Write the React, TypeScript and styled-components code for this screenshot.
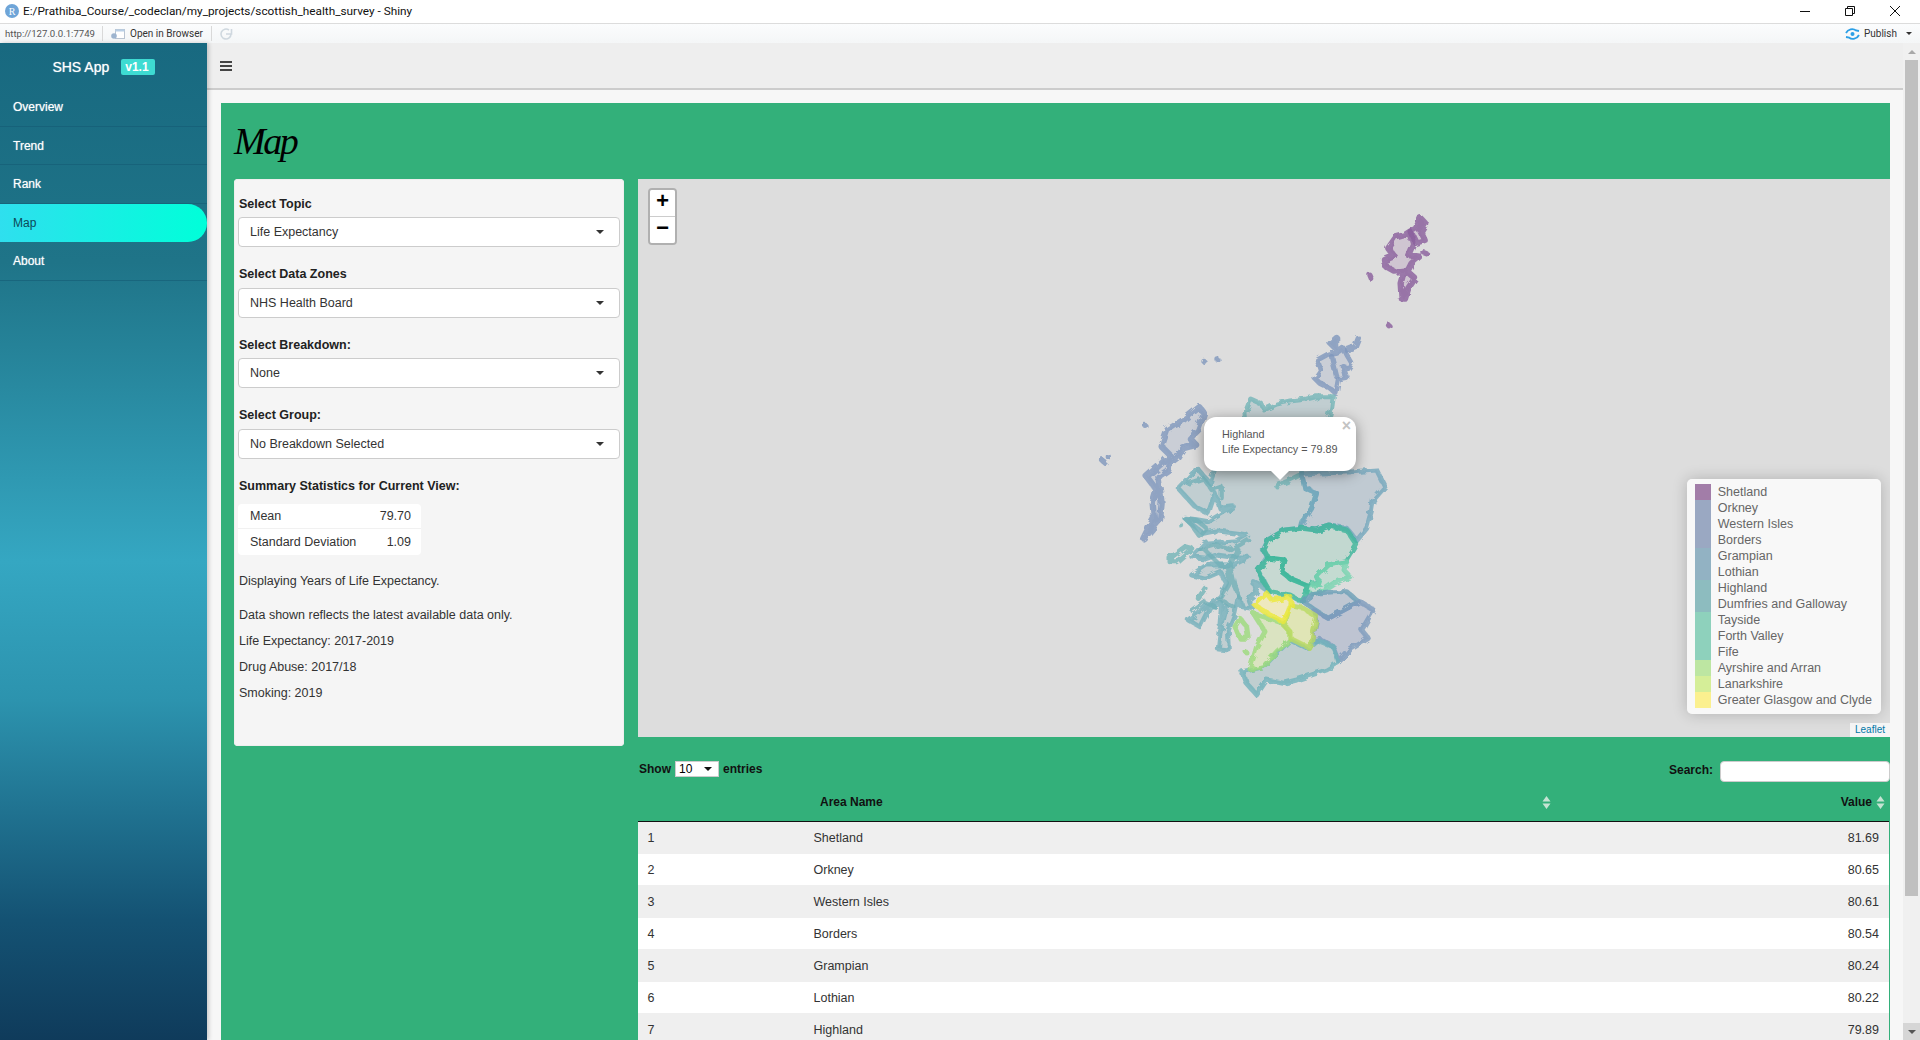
import styled, { createGlobalStyle } from "styled-components";

const GlobalStyle = createGlobalStyle`
  html, body {
    margin: 0;
    height: 100%;
    overflow: hidden;
    background: #fff;
    font-family: "Liberation Sans", Arial, sans-serif;
    font-size: 12.5px;
    color: #333;
  }
  * { box-sizing: border-box; }
`;

const Shell = styled.div`
  display: flex;
  flex-direction: column;
  width: 1920px;
  height: 1040px;
  overflow: hidden;
`;

/* window chrome */
const TitleBar = styled.div`
  display: flex;
  align-items: center;
  height: 24px;
  padding: 0 0 1px 5px;
  background: #fff;
  border-bottom: 1px solid #dcdcdc;
`;

const RLogo = styled.div`
  display: flex;
  align-items: center;
  justify-content: center;
  width: 14px;
  height: 14px;
  margin-right: 4px;
  border-radius: 50%;
  background: #6fa5d8;
  color: #fff;
  font-family: "Liberation Serif", serif;
  font-size: 10px;
`;

const TitleText = styled.div`
  flex: 1;
  font-family: Roboto, sans-serif;
  font-size: 11.8px;
  color: #111;
`;

const WinControls = styled.div`
  display: flex;
  align-items: center;
  gap: 35px;
  padding-right: 20px;
`;

const Toolbar = styled.div`
  display: flex;
  align-items: center;
  height: 19px;
  padding-left: 5px;
  background: linear-gradient(180deg, #fbfcfd 0%, #f4f6f7 100%);
  font-family: Roboto, sans-serif;
  font-size: 10px;
  color: #333;
`;

const UrlText = styled.span`
  width: 97px;
  font-size: 9.6px;
  white-space: nowrap;
  color: #555;
`;

const ToolSep = styled.div`
  width: 1px;
  height: 15px;
  background: #d9d9d9;
`;

const BrowserButton = styled.div`
  display: flex;
  align-items: center;
  gap: 5px;
  width: 108px;
  padding-left: 8px;
`;

const RefreshSlot = styled.div`
  display: flex;
  flex: 1;
  padding-left: 7px;
`;

const PublishButton = styled.div`
  display: flex;
  align-items: center;
  gap: 4px;
  padding-right: 8px;
`;

const PublishLabel = styled.span`
  width: 38px;
`;

const SmallCaret = styled.span<{ $color?: string; $size?: number }>`
  width: 0;
  height: 0;
  border-left: ${({ $size }) => $size ?? 4}px solid transparent;
  border-right: ${({ $size }) => $size ?? 4}px solid transparent;
  border-top: ${({ $size }) => $size ?? 4}px solid ${({ $color }) => $color ?? "#333"};
`;

const Body = styled.div`
  display: flex;
  flex: 1;
  min-height: 0;
`;

/* sidebar */
const Sidebar = styled.nav`
  flex: 0 0 207px;
  background: linear-gradient(180deg, #186980 0%, #1f7488 22%, #35a7c2 52%, #2c93ae 66%, #145273 88%, #0f3b5b 100%);
  box-shadow: 2px 0 4px rgba(0, 0, 0, 0.18);
  z-index: 1;
`;

const Brand = styled.div`
  display: flex;
  align-items: center;
  justify-content: center;
  gap: 12px;
  height: 45px;
  padding-top: 2px;
  color: #fff;
  font-size: 14px;
  text-shadow: 0 0 1px rgba(255, 255, 255, 0.7);
`;

const Version = styled.span`
  padding: 0 6px 0 4px;
  height: 16px;
  line-height: 17px;
  border-radius: 2px;
  background: #3edbd2;
  font-size: 12px;
  font-weight: 700;
  text-shadow: none;
`;

const NavItem = styled.div<{ $active?: boolean }>`
  display: flex;
  align-items: center;
  height: 38.5px;
  padding: 1px 0 0 13px;
  font-size: 12px;
  color: ${({ $active }) => ($active ? "#0c4a58" : "#fff")};
  text-shadow: ${({ $active }) => ($active ? "none" : "0 0 1px rgba(255,255,255,.65)")};
  border-bottom: 1px solid ${({ $active }) => ($active ? "transparent" : "rgba(20, 90, 115, 0.55)")};
  border-radius: ${({ $active }) => ($active ? "0 19px 19px 0" : "0")};
  background: ${({ $active }) => ($active ? "linear-gradient(90deg, #2fdfee 0%, #00ffd9 100%)" : "none")};
`;

/* page */
const Main = styled.div`
  display: flex;
  flex-direction: column;
  flex: 1;
  min-width: 0;
  background: #f7f7f7;
`;

const TopHeader = styled.div`
  display: flex;
  align-items: center;
  flex: 0 0 47px;
  padding-left: 13px;
  background: #eee;
  border-bottom: 2px solid #ccc;
`;

const Burger = styled.div`
  display: flex;
  flex-direction: column;
  gap: 2px;
  width: 12px;
  span {
    height: 2px;
    background: #444;
  }
`;

const Content = styled.div`
  flex: 1;
  min-height: 0;
  padding: 13px 13px 0 14px;
`;

const GreenPage = styled.div`
  height: 100%;
  background: #33b07a;
  overflow: hidden;
`;

const PageTitle = styled.h1`
  display: flex;
  align-items: center;
  height: 76px;
  margin: 0;
  padding: 0 0 0 13px;
  font-family: "Liberation Serif", serif;
  font-style: italic;
  font-weight: 400;
  font-size: 38px;
  letter-spacing: -2.5px;
  color: #000;
`;

const Columns = styled.div`
  display: flex;
  align-items: flex-start;
  gap: 14px;
  padding-left: 13px;
`;

const Panel = styled.div`
  flex: 0 0 390px;
  padding: 16.5px 4px 44px;
  background: #f5f5f5;
  border-radius: 4px;
  box-shadow: inset 0 0 0 1px #eee;
`;

const Field = styled.div`
  margin-bottom: 19px;
`;

const FieldLabel = styled.div`
  margin: 0 0 4.5px 1px;
  line-height: 17px;
  font-weight: 700;
  color: #222;
`;

const SummaryHeading = styled(FieldLabel)`
  margin: 2px 0 0 1px;
`;

const SelectBox = styled.div`
  display: flex;
  align-items: center;
  justify-content: space-between;
  height: 30px;
  padding: 0 15px 0 11px;
  background: #fff;
  border: 1px solid #ccc;
  border-radius: 4px;
  color: #333;
`;

const StatsTable = styled.div`
  width: 183px;
  margin-top: 9.5px;
  background: #fff;
  border-radius: 4px;
`;

const StatsRow = styled.div<{ $last?: boolean }>`
  display: flex;
  justify-content: space-between;
  height: ${({ $last }) => ($last ? 26 : 25)}px;
  padding: 0 10px 0 12px;
  align-items: center;
  border-bottom: ${({ $last }) => ($last ? "none" : "1px solid #f1f1f1")};
`;

const Note = styled.p<{ $gap: number }>`
  margin: ${({ $gap }) => $gap}px 0 0 1px;
  line-height: 17px;
`;

const RightColumn = styled.div`
  flex: 1;
  min-width: 0;
`;

/* map */
const MapFrame = styled.div`
  position: relative;
  height: 558px;
  background: #ddd;
  overflow: hidden;
`;

const MapSvg = styled.svg`
  position: absolute;
  inset: 0;
  width: 100%;
  height: 100%;
  filter: blur(0.6px);
`;

const ZoomControl = styled.div`
  position: absolute;
  left: 10px;
  top: 9px;
  width: 29px;
  border: 2px solid rgba(0, 0, 0, 0.2);
  border-radius: 4px;
  background-clip: padding-box;
`;

const ZoomButton = styled.div<{ $first?: boolean }>`
  display: flex;
  align-items: center;
  justify-content: center;
  height: 26.5px;
  background: #fff;
  border-bottom: ${({ $first }) => ($first ? "1px solid #ccc" : "none")};
  border-radius: ${({ $first }) => ($first ? "2px 2px 0 0" : "0 0 2px 2px")};
  font-family: "Lucida Console", "Liberation Mono", monospace;
  font-size: 22px;
  font-weight: 700;
  color: #000;
`;

const Popup = styled.div`
  position: absolute;
  left: 566px;
  top: 238px;
  width: 152px;
  height: 54px;
  padding: 10px 0 0 18px;
  background: #fff;
  border-radius: 12px;
  box-shadow: 0 3px 14px rgba(0, 0, 0, 0.4);
  font-size: 10.8px;
  line-height: 15px;
  color: #555;
  &::after {
    content: "";
    position: absolute;
    left: 67px;
    bottom: -9px;
    width: 0;
    height: 0;
    border-left: 9px solid transparent;
    border-right: 9px solid transparent;
    border-top: 9px solid #fff;
  }
`;

const PopupClose = styled.span`
  position: absolute;
  right: 5px;
  top: 1px;
  font-size: 16px;
  font-weight: 700;
  line-height: 16px;
  color: #c3c3c3;
`;

const Legend = styled.div`
  position: absolute;
  right: 9px;
  bottom: 23px;
  padding: 5px 9px 6px 8px;
  background: rgba(255, 255, 255, 0.8);
  border-radius: 5px;
  box-shadow: 0 0 15px rgba(0, 0, 0, 0.2);
  color: #666;
  font-size: 12.5px;
`;

const LegendRow = styled.div`
  display: flex;
  align-items: center;
  height: 16px;
  white-space: nowrap;
`;

const Swatch = styled.i<{ $color: string }>`
  flex: 0 0 16px;
  height: 16px;
  margin-right: 7px;
  background: ${({ $color }) => $color};
`;

const Attribution = styled.div`
  position: absolute;
  right: 0;
  bottom: 0;
  height: 14px;
  padding: 0 5px;
  line-height: 14px;
  background: rgba(255, 255, 255, 0.7);
  font-size: 10px;
  color: #0078a8;
`;

/* data table */
const TableTools = styled.div`
  display: flex;
  justify-content: space-between;
  align-items: flex-start;
  height: 45px;
  padding: 24px 0 0 1px;
  font-size: 12px;
  font-weight: 700;
  color: #111;
`;

const LengthControl = styled.div`
  display: flex;
  align-items: center;
  gap: 4px;
  height: 16px;
`;

const LengthSelect = styled.div`
  display: flex;
  align-items: center;
  justify-content: space-between;
  width: 44px;
  height: 16px;
  padding: 0 6px 0 3px;
  background: #fff;
  border: 1px solid #ccc;
  font-weight: 400;
  color: #000;
`;

const SearchControl = styled.div`
  display: flex;
  align-items: flex-start;
  gap: 7px;
  height: 21px;
  line-height: 18px;
`;

const SearchInput = styled.div`
  width: 170px;
  height: 21px;
  background: #fff;
  border: 1px solid #ccc;
  border-radius: 4px;
`;

const DataTable = styled.table`
  width: 1251px;
  border-collapse: collapse;
  table-layout: fixed;
`;

const HeadCell = styled.th<{ $right?: boolean }>`
  position: relative;
  height: 39px;
  padding: 1px ${({ $right }) => ($right ? "17px" : "16px")} 0 16px;
  text-align: ${({ $right }) => ($right ? "right" : "left")};
  font-size: 12px;
  font-weight: 700;
  color: #111;
  border-bottom: 1px solid #111;
`;

const SortIcon = styled.svg`
  position: absolute;
  right: 4px;
  top: 14px;
`;

const BodyRow = styled.tr`
  &:nth-child(odd) {
    height: 33px;
    background: #efefef;
  }
  &:nth-child(even) {
    height: 31px;
    background: #fff;
  }
`;

const Cell = styled.td<{ $right?: boolean }>`
  padding: 0 ${({ $right }) => ($right ? "10px" : "9.5px")};
  text-align: ${({ $right }) => ($right ? "right" : "left")};
  color: #333;
`;

/* fake browser scrollbar */
const ScrollBar = styled.div`
  display: flex;
  flex-direction: column;
  flex: 0 0 17px;
  background: #f0f0f0;
`;

const ScrollArrow = styled.div<{ $down?: boolean }>`
  display: flex;
  align-items: center;
  justify-content: center;
  flex: 0 0 17px;
  background: ${({ $down }) => ($down ? "#d6d6d6" : "#f0f0f0")};
  span {
    transform: ${({ $down }) => ($down ? "none" : "rotate(180deg)")};
  }
`;

const ScrollThumb = styled.div`
  flex: 0 0 836px;
  margin: 0 2px;
  background: #c0c0c0;
`;

const ScrollTrack = styled.div`
  flex: 1;
`;

type Region = { d: string; stroke: string; fill?: string; width?: number };

// north half, coordinates read off a 3x crop starting at 1080,200
const northRegions: Region[] = [
  { stroke: "#8a5f9c", width: 19, fill: "rgba(160,110,170,.22)", d: "M1022 55L1036 70L1022 95L1034 120L1008 128L992 95L1008 85Z" },
  { stroke: "#8a5f9c", width: 19, fill: "rgba(160,110,170,.22)", d: "M990 95L1000 130L985 165L1018 170L995 190L982 215L1005 235L985 265L975 296L965 295L962 250L972 212L945 215L918 200L915 180L942 168L925 145L948 112L975 105Z" },
  { stroke: "#8a5f9c", width: 16, d: "M870 226L875 238M926 376L930 380M1032 158L1040 161" },
  { stroke: "#7f97bd", width: 16, fill: "rgba(130,150,190,.2)", d: "M770 412L750 430L775 455L790 445L800 465L815 490L805 505L790 500L800 535L775 540L768 580L750 565L720 550L705 535L722 510L712 480L745 462L770 460Z" },
  { stroke: "#7f97bd", width: 16, d: "M835 415L825 440L800 450M755 470L770 530M372 484L372 484M411 477L411 477M195 676L195 676M65 780L75 788M85 770L85 770" },
  { stroke: "#7f97bd", width: 19, fill: "rgba(130,150,190,.2)", d: "M358 622L372 640L355 690L330 715L348 735L310 745L290 775L270 790L265 810L235 830L240 870L245 910L240 960L205 1000L190 1015L205 985L222 955L218 910L230 870L200 830L240 795L270 765L245 740L262 690L310 660Z" },
  { stroke: "#74b5b8", fill: "rgba(110,165,175,.25)", d: "M760 590L755 625L745 660L745 720L500 720L495 640L512 597L545 612L552 630L590 612L630 603L680 597L710 590Z" },
];

// south half, same idea, crop starting at 1120,450
const southRegions: Region[] = [
  { stroke: "#74b0bb", fill: "rgba(110,165,175,.25)", d: "M300 20L545 20L545 75L555 115L590 130L575 175L545 215L540 235L495 240L445 268L430 300L442 320L415 360L432 395L445 425L420 405L400 395L408 430L385 450L395 475L365 470L355 440L345 490L325 540L328 600L295 597L300 550L320 470L305 490L300 525L305 460L270 470L240 530L205 510L255 470L300 440L320 400L300 365L255 385L215 375L260 345L340 345L385 322L330 320L290 315L260 325L215 320L255 280L350 272L380 255L350 250L290 242L250 250L195 205L235 210L265 215L340 170L300 175L285 130L265 190L225 170L175 115L232 55L270 100L290 40Z" },
  { stroke: "#74b5b8", d: "M470 108L500 95L545 72M150 335L170 335L215 295L195 290L150 325ZM235 445L255 415M185 228L185 228" },
  // sea lochs and small islands of the west coast
  { stroke: "#74b0b8", width: 13, d: "M205 100L250 85L275 120L305 110L305 145M195 205L230 210L260 235L240 260L215 225ZM240 300L290 285L335 300L385 270M255 300L300 345L330 345L355 300M320 345L330 400L300 450L340 470M330 345L345 410L360 445M215 480L250 455L285 470" },
  { stroke: "#74a7bd", fill: "rgba(125,160,185,.3)", d: "M545 72L620 68L700 65L770 60L795 110L760 150L755 180L740 235L710 272L680 235L630 228L590 240L540 232L575 175L590 130L555 115Z" },
  { stroke: "#3fb59b", fill: "rgba(125,205,175,.28)", d: "M545 235L495 240L445 270L432 300L445 325L495 330L485 365L510 385L560 405L600 400L590 380L625 345L680 335L710 285L680 240L630 228L590 240Z" },
  { stroke: "#78d4b0", fill: "rgba(125,215,175,.25)", d: "M590 380L625 345L680 335L672 360L690 380L640 400L610 420L580 432L560 425L565 410L600 400Z" },
  { stroke: "#3fb89b", fill: "rgba(125,205,175,.22)", d: "M445 325L495 330L485 365L510 385L565 408L560 430L545 455L510 435L450 425L430 395L415 360Z" },
  { stroke: "#6a9fb6", fill: "rgba(120,150,185,.3)", d: "M550 455L580 430L640 425L680 425L715 455L680 475L625 505L585 480Z" },
  { stroke: "#7d9bbd", fill: "rgba(120,140,185,.3)", d: "M585 485L625 505L720 455L760 480L725 540L745 565L690 600L658 635L640 590L600 568L575 575L590 510Z" },
  { stroke: "#70b3bb", fill: "rgba(110,165,175,.27)", d: "M590 570L640 590L655 638L620 660L560 680L530 690L490 700L440 690L410 735L380 700L368 665L390 660L430 650L470 610L510 570L560 595Z" },
  { stroke: "#9cdb7c", fill: "rgba(215,235,160,.45)", d: "M400 490L430 500L490 520L510 545L510 570L470 605L430 650L390 658L410 590L435 545Z" },
  { stroke: "#9cdb7c", d: "M360 505L380 530L385 565L360 565L345 530ZM378 606L378 606" },
  { stroke: "#b9da60", fill: "rgba(225,235,150,.55)", d: "M495 520L510 465L540 470L590 500L570 595L510 565L510 545L490 525Z" },
  { stroke: "#ece83a", fill: "rgba(250,240,170,.6)", d: "M440 430L455 450L510 440L515 465L490 515L440 490L405 465Z" },
];

const legendItems = [
  { name: "Shetland", color: "#a27da8" },
  { name: "Orkney", color: "#9aa8c2" },
  { name: "Western Isles", color: "#9aa8c2" },
  { name: "Borders", color: "#9aa8c2" },
  { name: "Grampian", color: "#92b2c3" },
  { name: "Lothian", color: "#92b2c3" },
  { name: "Highland", color: "#8dbcbf" },
  { name: "Dumfries and Galloway", color: "#8dbcbf" },
  { name: "Tayside", color: "#8ed1bc" },
  { name: "Forth Valley", color: "#8ed1bc" },
  { name: "Fife", color: "#8ed1bc" },
  { name: "Ayrshire and Arran", color: "#bde6a2" },
  { name: "Lanarkshire", color: "#d5ee98" },
  { name: "Greater Glasgow and Clyde", color: "#fbf08f" },
];

const rows = [
  ["1", "Shetland", "81.69"],
  ["2", "Orkney", "80.65"],
  ["3", "Western Isles", "80.61"],
  ["4", "Borders", "80.54"],
  ["5", "Grampian", "80.24"],
  ["6", "Lothian", "80.22"],
  ["7", "Highland", "79.89"],
];

const fields = [
  { label: "Select Topic", value: "Life Expectancy" },
  { label: "Select Data Zones", value: "NHS Health Board" },
  { label: "Select Breakdown:", value: "None" },
  { label: "Select Group:", value: "No Breakdown Selected" },
];

const navItems = ["Overview", "Trend", "Rank", "Map", "About"];

function SortArrows() {
  return (
    <SortIcon width="9" height="13" viewBox="0 0 9 13">
      <path d="M4.5 0L8.5 5.5H.5Z M4.5 13L.5 7.5H8.5Z" fill="#c5e3d3" />
    </SortIcon>
  );
}

function RegionPaths({ regions, transform }: { regions: Region[]; transform: string }) {
  return (
    <g transform={transform} strokeLinejoin="round" strokeLinecap="round">
      {regions.map((r, i) => (
        <path key={i} d={r.d} stroke={r.stroke} strokeWidth={r.width ?? 15} strokeOpacity={0.8} fill={r.fill ?? "none"} />
      ))}
    </g>
  );
}

export default function App() {
  return (
    <Shell>
      <GlobalStyle />
      <TitleBar>
        <RLogo>R</RLogo>
        <TitleText>E:/Prathiba_Course/_codeclan/my_projects/scottish_health_survey - Shiny</TitleText>
        <WinControls>
          <svg width="10" height="10" viewBox="0 0 10 10" stroke="#111" fill="none">
            <path d="M0 5.5H10" />
          </svg>
          <svg width="10" height="10" viewBox="0 0 10 10" stroke="#111" fill="none">
            <path d="M.5 2.5H7.5V9.5H.5ZM2.5 2.5V.5H9.5V7.5H7.5" />
          </svg>
          <svg width="10" height="10" viewBox="0 0 10 10" stroke="#111" fill="none">
            <path d="M0 0L10 10M10 0L0 10" />
          </svg>
        </WinControls>
      </TitleBar>
      <Toolbar>
        <UrlText>http://127.0.0.1:7749</UrlText>
        <ToolSep />
        <BrowserButton>
          <svg width="14" height="12" viewBox="0 0 14 12">
            <rect x="4.5" y="1.5" width="9" height="9" fill="#fff" stroke="#b9c4d2" />
            <rect x="4.5" y="1.5" width="9" height="2" fill="#b9cfe6" />
            <circle cx="3" cy="8" r="2.8" fill="#9db4cf" />
          </svg>
          Open in Browser
        </BrowserButton>
        <ToolSep />
        <RefreshSlot>
          <svg width="14" height="14" viewBox="0 0 14 14" fill="none" stroke="#cfd8df" strokeWidth="1.6">
            <path d="M12 7A5 5 0 1 1 10 3M7 7H12.5V2" />
          </svg>
        </RefreshSlot>
        <PublishButton>
          <svg width="15" height="12" viewBox="0 0 15 12" fill="none" stroke="#2b9fe6" strokeWidth="1.8">
            <path d="M1 5C3 1 8 0 11 2.5L14 3M14 7C12 11 7 12 4 9.5L1 9" />
            <circle cx="7.5" cy="6" r="2" fill="#2b9fe6" stroke="none" />
          </svg>
          <PublishLabel>Publish</PublishLabel>
          <SmallCaret $size={3} />
        </PublishButton>
      </Toolbar>
      <Body>
        <Sidebar>
          <Brand>
            SHS App
            <Version>v1.1</Version>
          </Brand>
          {navItems.map((item) => (
            <NavItem key={item} $active={item === "Map"}>
              {item}
            </NavItem>
          ))}
        </Sidebar>
        <Main>
          <TopHeader>
            <Burger>
              <span />
              <span />
              <span />
            </Burger>
          </TopHeader>
          <Content>
            <GreenPage>
              <PageTitle>Map</PageTitle>
              <Columns>
                <Panel>
                  {fields.map((f) => (
                    <Field key={f.label}>
                      <FieldLabel>{f.label}</FieldLabel>
                      <SelectBox>
                        {f.value}
                        <SmallCaret />
                      </SelectBox>
                    </Field>
                  ))}
                  <SummaryHeading>Summary Statistics for Current View:</SummaryHeading>
                  <StatsTable>
                    <StatsRow>
                      <span>Mean</span>
                      <span>79.70</span>
                    </StatsRow>
                    <StatsRow $last>
                      <span>Standard Deviation</span>
                      <span>1.09</span>
                    </StatsRow>
                  </StatsTable>
                  <Note $gap={17.5}>Displaying Years of Life Expectancy.</Note>
                  <Note $gap={17}>Data shown reflects the latest available data only.</Note>
                  <Note $gap={9}>Life Expectancy: 2017-2019</Note>
                  <Note $gap={9}>Drug Abuse: 2017/18</Note>
                  <Note $gap={9}>Smoking: 2019</Note>
                </Panel>
                <RightColumn>
                  <MapFrame>
                    <MapSvg viewBox="638 179 1252 558">
                      <defs>
                        <filter id="coast" x="-5%" y="-5%" width="110%" height="110%">
                          <feTurbulence type="fractalNoise" baseFrequency="0.14" numOctaves="2" seed="4" result="noise" />
                          <feDisplacementMap in="SourceGraphic" in2="noise" scale="6" />
                        </filter>
                      </defs>
                      <g filter="url(#coast)">
                        <RegionPaths regions={northRegions} transform="translate(1080 200) scale(.3333)" />
                        <RegionPaths regions={southRegions} transform="translate(1120 450) scale(.3333)" />
                      </g>
                    </MapSvg>
                    <ZoomControl>
                      <ZoomButton $first>+</ZoomButton>
                      <ZoomButton>−</ZoomButton>
                    </ZoomControl>
                    <Popup>
                      <PopupClose>×</PopupClose>
                      Highland
                      <br />
                      Life Expectancy = 79.89
                    </Popup>
                    <Legend>
                      {legendItems.map((l) => (
                        <LegendRow key={l.name}>
                          <Swatch $color={l.color} />
                          {l.name}
                        </LegendRow>
                      ))}
                    </Legend>
                    <Attribution>Leaflet</Attribution>
                  </MapFrame>
                  <TableTools>
                    <LengthControl>
                      Show
                      <LengthSelect>
                        10
                        <SmallCaret $color="#111" />
                      </LengthSelect>
                      entries
                    </LengthControl>
                    <SearchControl>
                      Search:
                      <SearchInput />
                    </SearchControl>
                  </TableTools>
                  <DataTable>
                    <colgroup>
                      <col style={{ width: 166 }} />
                      <col style={{ width: 751 }} />
                      <col />
                    </colgroup>
                    <thead>
                      <tr>
                        <HeadCell />
                        <HeadCell>
                          Area Name
                          <SortArrows />
                        </HeadCell>
                        <HeadCell $right>
                          Value
                          <SortArrows />
                        </HeadCell>
                      </tr>
                    </thead>
                    <tbody>
                      {rows.map((r) => (
                        <BodyRow key={r[0]}>
                          <Cell>{r[0]}</Cell>
                          <Cell>{r[1]}</Cell>
                          <Cell $right>{r[2]}</Cell>
                        </BodyRow>
                      ))}
                    </tbody>
                  </DataTable>
                </RightColumn>
              </Columns>
            </GreenPage>
          </Content>
        </Main>
        <ScrollBar>
          <ScrollArrow>
            <SmallCaret $color="#a8a8a8" />
          </ScrollArrow>
          <ScrollThumb />
          <ScrollTrack />
          <ScrollArrow $down>
            <SmallCaret $color="#555" />
          </ScrollArrow>
        </ScrollBar>
      </Body>
    </Shell>
  );
}
